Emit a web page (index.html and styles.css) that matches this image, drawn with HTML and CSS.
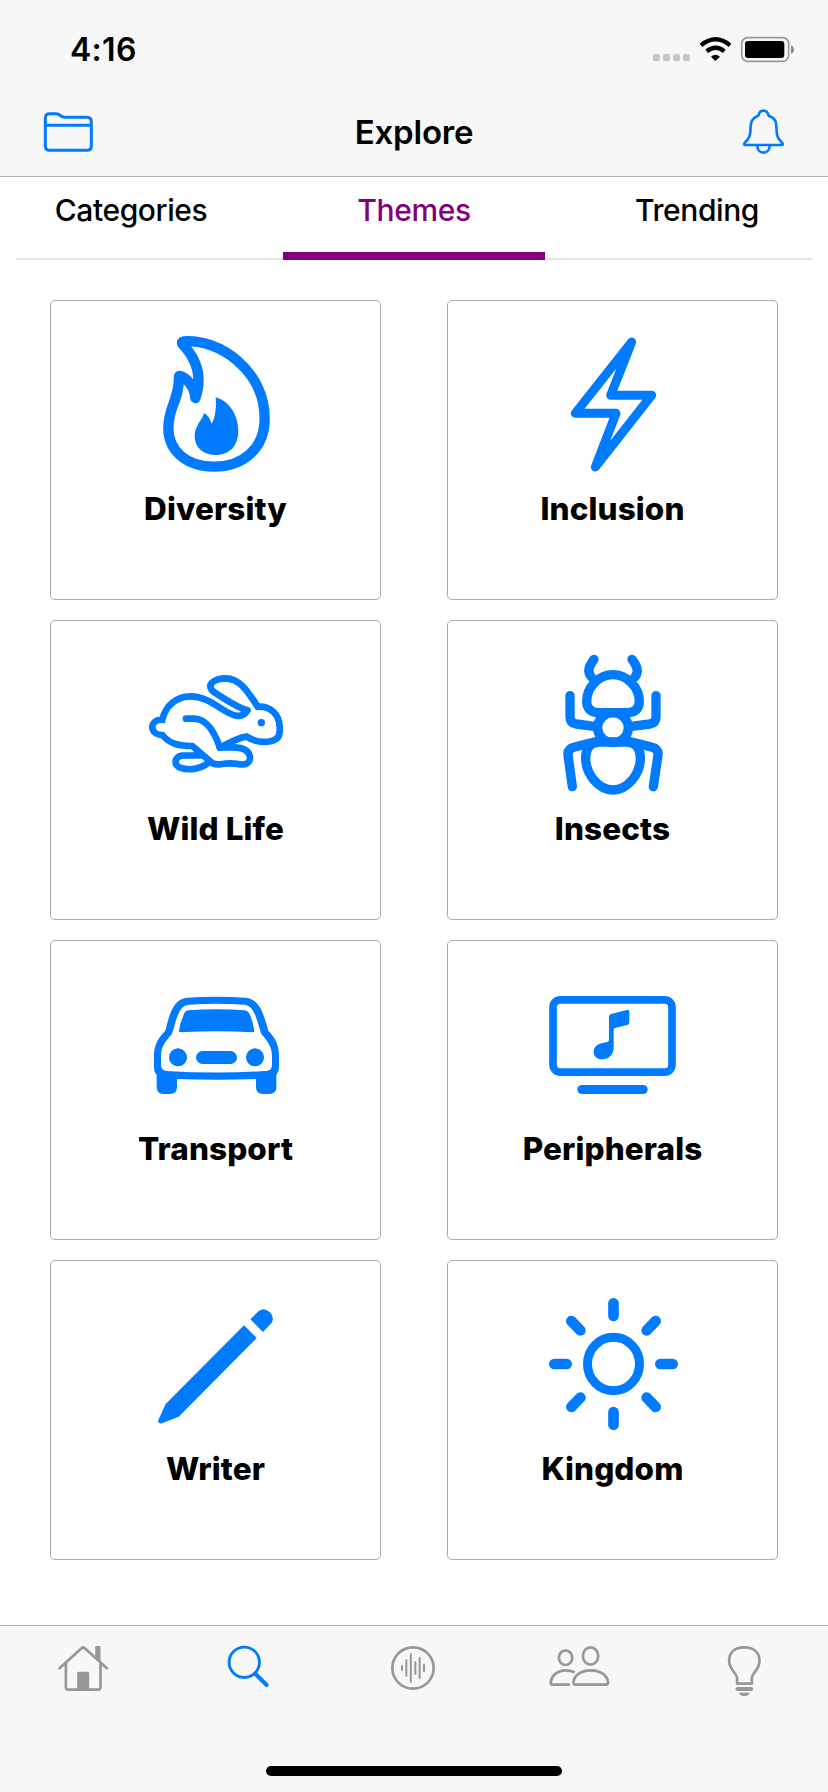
FILE: index.html
```html
<!DOCTYPE html>
<html lang="en">
<head>
<meta charset="utf-8">
<title>Explore</title>
<link rel="stylesheet" href="styles.css">
</head>
<body>
<div class="screen">
  <header class="header">
    <div class="status">
      <span class="time">4:16</span>
      <svg class="status-icons" viewBox="699 99 450 99">
        <g fill="#c6c6c6"><rect x="717" y="162" width="21" height="22" rx="6"/><rect x="747" y="162" width="21" height="22" rx="6"/><rect x="777" y="162" width="21" height="22" rx="6"/><rect x="807" y="162" width="21" height="22" rx="6"/></g>
        <g fill="none" stroke="#000" stroke-width="13"><path d="M861 136Q905 100 948 136"/><path d="M878 154Q905 133 931 154"/></g>
        <path d="M891 170Q904 158 918 170L904 183Z"/>
        <rect x="983" y="113" width="141" height="71" rx="18" fill="none" stroke="#999" stroke-width="5"/>
        <rect x="993" y="123" width="118" height="51" rx="9"/>
        <path d="M1131 136Q1140 140 1140 149T1131 161Z" fill="#8b8b8b"/>
      </svg>
    </div>
    <div class="navbar">
      <svg class="folder line-icon" viewBox="120 324 180 144" stroke-width="9">
        <path d="M136 354Q136 341 149 341H168C182 341 181 352 193 352H260Q274 352 274 366V438Q274 451 261 451H149Q136 451 136 438Z"/><path d="M138 376H273"/>
      </svg>
      <h1 class="title">Explore</h1>
      <svg class="bell line-icon" viewBox="972 324 150 144" stroke-width="8">
        <path d="M992 435H1105Q1108 432 1104 428L1096 419C1082 405 1092 377 1083 361Q1078 352 1064 347C1059 327 1037 327 1033 347Q1019 352 1014 362C1005 378 1015 404 1001 418L992 429Q989 433 992 435Z"/><path d="M1030 437C1030 465 1067 465 1067 437"/>
      </svg>
    </div>
  </header>

  <nav class="tabs">
    <a class="tab">Categories</a>
    <a class="tab tab-active">Themes</a>
    <a class="tab">Trending</a>
  </nav>

  <main class="grid">
    <section class="card">
      <svg class="art" viewBox="-237 -57 987 540">
        <path class="stroke" stroke-width="31" d="M161 64C268 56 404 150 404 297C404 384 340 440 252 440C166 440 115 389 115 325C115 257 148 243 147 168C166 170 194 197 196 234C216 176 205 122 157 72Q154 65 161 64Z"/>
        <path d="M257 232C292 241 325 279 325 333C325 378 297 405 258 405C219 405 194 382 194 348C194 316 218 300 222 279Q238 287 245 312C257 292 259 260 257 232Z"/>
      </svg>
      <h2 class="label">Diversity</h2>
    </section>
    <section class="card">
      <svg class="art" viewBox="-246 -57 987 540">
        <path class="stroke" stroke-width="27" d="M305 66L136 280H258L196 441L365 226H242Z"/>
      </svg>
      <h2 class="label">Inclusion</h2>
    </section>
    <section class="card">
      <svg class="art" viewBox="-237 -57 987 540">
        <g class="stroke" stroke-width="20">
          <path stroke-linejoin="miter" d="M352 211Q343 230 318 227C280 220 240 169 182 169C139 169 106 198 97 239C58 237 56 284 97 285C120 313 149 318 187 318L239 363Q252 377 275 372Q302 368 323 372C348 377 360 368 360 354C359 329 335 321 302 322L270 322C257 291 238 237 192 236H168"/>
          <path stroke-linejoin="miter" d="M269 323C294 312 319 294 350 290C373 305 400 309 425 303C449 297 450 283 449 260C447 222 420 197 383 200C353 153 329 115 286 115C260 116 231 128 245 150C252 158 325 204 352 211"/>
          <path d="M210 346C188 347 177 346 156 347C134 348 128 377 153 384C182 393 218 384 237 367"/>
        </g>
        <circle cx="394" cy="248" r="11"/>
      </svg>
      <h2 class="label">Wild Life</h2>
    </section>
    <section class="card">
      <svg class="art" viewBox="-246 -57 987 540">
        <g class="stroke" stroke-width="28">
          <path d="M249 104C204 104 170 144 170 184C170 207 184 218 205 218H293C315 218 328 207 328 184C328 144 293 104 249 104Z"/>
          <ellipse cx="249" cy="263" rx="46" ry="45"/>
          <path d="M210 306H288C317 306 331 326 331 354C331 404 291 450 249 450C207 450 167 404 167 354C167 326 182 306 210 306Z"/>
          <path d="M192 58C177 79 170 93 184 111M306 58C321 79 328 93 315 111"/>
          <path d="M120 167V230Q120 249 138 252L200 260M378 167V230Q378 249 360 252L298 260"/>
          <path d="M208 302L134 321Q112 326 114 345L127 440M290 302L364 321Q386 326 384 345L370 440"/>
        </g>
      </svg>
      <h2 class="label">Insects</h2>
    </section>
    <section class="card">
      <svg class="art" viewBox="-237 -87 987 540">
        <path fill-rule="evenodd" d="M171 83Q260 78 347 83C391 87 402 137 415 182C436 204 447 226 447 255V286C447 301 445 306 439 315V351Q439 372 418 372H399Q378 372 378 351V327Q260 332 141 327V351Q141 372 120 372H101Q80 372 80 351V315C73 306 72 301 72 286V255C72 226 84 203 106 182C117 137 129 87 171 83ZM176 104C145 106 139 151 126 192C105 215 93 232 93 257V285Q93 301 109 303Q260 312 410 303Q426 301 426 285V257C426 232 414 215 394 192C380 151 374 106 342 104Q259 98 176 104Z"/>
        <path d="M175 121Q260 115 344 121Q355 122 361 137Q370 159 373 183Q373 187 368 187Q260 180 151 187Q146 187 147 182Q150 159 160 137Q165 122 175 121Z"/>
        <circle cx="144" cy="262" r="27"/><circle cx="375" cy="262" r="27"/><rect x="198" y="243" width="123" height="39" rx="19.500"/>
      </svg>
      <h2 class="label">Transport</h2>
    </section>
    <section class="card">
      <svg class="art" viewBox="-186 -87 987 540">
        <rect class="stroke" stroke-width="23" x="129" y="89.500" width="357" height="217" rx="22"/>
        <rect x="202" y="345" width="211" height="27" rx="13.500"/>
        <path d="M303 132L350 120Q358 118 358 126V157Q358 163 352 165L315 174Q311 175 311 180V231C311 254 297 268 276 268C260 268 251 258 251 246C251 232 260 224 275 220L292 216Q297 215 297 209V139Q297 134 303 132Z"/>
      </svg>
      <h2 class="label">Peripherals</h2>
    </section>
    <section class="card">
      <svg class="art" viewBox="-237 -87 987 540">
        <path d="M342 106L380 144L146 380L96 400Q82 403 85 390L107 342ZM361 88L383 66Q400 49 420 67Q437 86 421 103L399 126Z"/>
      </svg>
      <h2 class="label">Writer</h2>
    </section>
    <section class="card">
      <svg class="art" viewBox="-216 -57 987 540">
        <ellipse class="stroke" stroke-width="27" cx="280.500" cy="252" rx="78" ry="80"/>
        <path class="stroke" stroke-width="32" d="M280.500 70V108M280.500 396V434M103 252H140M421 252H458M154 123L181 151M407 123L380 151M154 381L181 353M407 381L380 353"/>
      </svg>
      <h2 class="label">Kingdom</h2>
    </section>
  </main>

  <footer class="tabbar">
    <div class="tabbar-items">
      <svg class="item" viewBox="134.400 300 228 180">
        <g class="item-line" stroke-width="8"><path d="M178 385L244 325Q249 320 254 325L320 385"/><path d="M197 369V441Q197 449 205 449H293Q301 449 301 441V369"/></g>
        <path d="M285 356V322Q285 318 289 318H297Q301 318 301 322V370ZM231 449V400Q231 395 236 395H262Q267 395 267 400V449Z"/>
      </svg>
      <svg class="item item-active" viewBox="631.200 300 228 180">
        <g class="item-line"><circle cx="734" cy="367" r="45.500" stroke-width="8.500"/><path d="M768 402L801 435" stroke-width="12"/></g>
      </svg>
      <svg class="item" viewBox="1128 300 228 180">
        <g class="item-line"><circle cx="1239" cy="384" r="62" stroke-width="8"/><path stroke-width="6" d="M1206 378V390M1219 361V407M1232.500 343V425M1246 366V402M1259 354V414M1272 374V393"/></g>
      </svg>
      <svg class="item" viewBox="382.800 300 228 180">
        <g class="item-line" stroke-width="8"><ellipse cx="453.500" cy="353" rx="20" ry="22"/><ellipse cx="528.500" cy="348" rx="23" ry="26"/><path d="M483 434H574Q581 434 581 427C578 404 556 391 529 391C502 391 480 404 477 427Q477 434 483 434Z"/><path stroke-linecap="butt" d="M467 434H415Q409 434 409 428C411 405 431 391 454 391Q469 391 481 397"/></g>
      </svg>
      <svg class="item" viewBox="879.600 300 228 180">
        <path class="item-line" stroke-width="8" stroke-linejoin="miter" d="M970 431V415C970 399 946 390 946 363C946 337 963 322 991.500 322C1020 322 1037 337 1037 363C1037 390 1014 399 1014 415V431Z"/>
        <rect x="965" y="441" width="53" height="12" rx="6"/><path d="M975 458H1008Q1004 468 991.500 468T975 458Z"/>
      </svg>
    </div>
    <div class="home-indicator"></div>
  </footer>
</div>
</body>
</html>
```
FILE: styles.css
```css
* { box-sizing: border-box; }
body { margin: 0; background: #fff; color: #000; font-family: Inter, "Liberation Sans", sans-serif; }
svg { display: block; flex: none; }
.screen { width: 828px; height: 1792px; display: flex; flex-direction: column; }

.header { height: 177px; background: #f7f7f7; border-bottom: 1px solid #b2b2b2; }
.status { height: 88px; padding: 33px 31px 0 70px; display: flex; justify-content: space-between; }
.time { font-size: 32px; line-height: 34px; font-weight: 600; letter-spacing: 0.3px; }
.status-icons { width: 150px; height: 33px; }
.navbar { height: 88px; padding: 0 40px; display: grid; grid-template-columns: 60px 1fr 60px; align-items: center; }
.title { margin: 0; text-align: center; font-size: 33px; font-weight: 600; line-height: 40px; letter-spacing: -0.2px; }
.line-icon { fill: none; stroke: #007aff; stroke-linecap: round; stroke-linejoin: round; }
.folder { width: 60px; height: 48px; }
.bell { width: 50px; height: 48px; justify-self: end; }

.tabs { height: 83px; display: grid; grid-template-columns: repeat(3, 262px); gap: 21px; background: linear-gradient(#e4e4e4, #e4e4e4) 16px 81px / 796px 2px no-repeat; }
.tab { text-align: center; font-size: 30px; font-weight: 500; line-height: 36px; padding-top: 15px; letter-spacing: -0.4px; }
.tab-active { color: #800080; border-bottom: 8px solid #800080; }

.grid { flex: 1; padding: 40px 50px 0; display: grid; grid-template-columns: 331px 331px; grid-auto-rows: 300px; column-gap: 66px; row-gap: 20px; }
.card { border: 1px solid #aaa; border-radius: 5px; }
.art { width: 329px; height: 180px; fill: #007aff; }
.stroke { fill: none; stroke: #007aff; stroke-linecap: round; stroke-linejoin: round; }
.label { margin: 8px 0 0; text-align: center; font-size: 31.5px; font-weight: 800; line-height: 40px; letter-spacing: 0.1px; }

.tabbar { height: 167px; padding: 14px 0 16px; background: #f7f7f7; border-top: 1px solid #b2b2b2; display: flex; flex-direction: column; justify-content: space-between; }
.tabbar-items { display: flex; justify-content: space-around; }
.item { width: 76px; height: 60px; fill: #979797; stroke: none; }
.item-line { fill: none; stroke: #979797; stroke-linecap: round; stroke-linejoin: round; }
.item-active .item-line { stroke: #007aff; }
.home-indicator { width: 296px; height: 10px; margin: 0 auto; border-radius: 5px; background: #000; }
```
